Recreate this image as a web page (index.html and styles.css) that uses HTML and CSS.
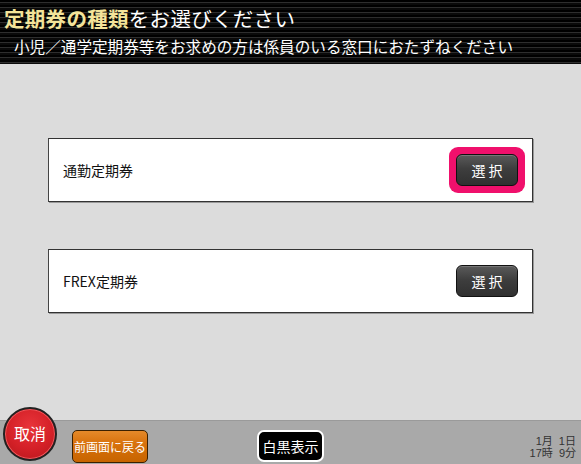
FILE: index.html
```html
<!doctype html>
<html lang="ja">
  <head>
    <meta charset="utf-8"/>
    <title>定期券の種類</title>
    <link rel="stylesheet" href="styles.css">
  </head>
  <body>
    <div class="header">
      <h1 class="header__title"><span class="header__accent">定期券の種類</span>をお選びください</h1>
      <p class="header__note">小児／通学定期券等をお求めの方は係員のいる窓口におたずねください</p>
    </div>

    <div class="main">
      <div class="card">
        <span class="card__label">通勤定期券</span>
        <span class="card__focus"><a class="btn card__btn">選 択</a></span>
      </div>
      <div class="card">
        <span class="card__label">FREX定期券</span>
        <span class="card__slot"><a class="btn card__btn">選 択</a></span>
      </div>
    </div>

    <div class="footer">
      <a class="footer__cancel">取消</a>
      <a class="footer__back">前画面に戻る</a>
      <a class="footer__mono">白黒表示</a>
      <div class="footer__clock">
        <span class="footer__line">1月&nbsp;&nbsp;1日</span>
        <span class="footer__line">17時&nbsp;&nbsp;9分</span>
      </div>
    </div>
  </body>
</html>
```

FILE: styles.css
```css
body {
  margin: 0;
  width: 581px;
  height: 464px;
  display: flex;
  flex-direction: column;
  overflow: hidden;
  font-family: "Noto Sans CJK JP", "Noto Sans", sans-serif;
  background-color: #dcdcdc;
}
.header {
  height: 64px;
  flex-shrink: 0;
  padding: 0 0 0 4px;
  box-sizing: border-box;
  background: repeating-linear-gradient(to bottom, #000 0, #000 2px, #2e2e2e 2px, #2e2e2e 3px, #0a0a0a 3px, #0a0a0a 5px);
  color: #fff;
}
.header__title {
  margin: 0;
  font-size: 20.5px;
  font-weight: normal;
  line-height: 30px;
  padding-top: 3px;
  letter-spacing: 0.3px;
}
.header__accent {
  color: #f4e49a;
  font-weight: bold;
}
.header__note {
  margin: 0;
  padding-left: 10px;
  font-size: 15.6px;
  line-height: 26px;
}
.main {
  flex: 1;
  display: flex;
  flex-direction: column;
  gap: 47px;
  padding: 74px 48px 0 48px;
}
.card {
  height: 62px;
  display: flex;
  align-items: center;
  justify-content: space-between;
  background-color: #fff;
  border: 1px solid #333;
  border-left-color: #444;
  box-shadow: 1px 1px 0 #999;
  padding: 0 7px 0 14px;
}
.card__label {
  font-size: 14px;
  color: #111;
}
.card__focus {
  display: flex;
  padding: 7px;
  border-radius: 9px;
  background-color: #f0106c;
}
.card__slot {
  display: flex;
  padding: 7px;
}
.btn {
  display: block;
  width: 62px;
  height: 32px;
  box-sizing: border-box;
  line-height: 30px;
  text-align: center;
  color: #fff;
  font-size: 14px;
  border-radius: 6px;
  border: 1px solid #111;
  background: linear-gradient(to bottom, #5a5a5a 0, #3e3e3e 45%, #303030 100%);
  box-shadow: inset 0 1px 0 #777;
}
.footer {
  height: 43px;
  flex-shrink: 0;
  display: flex;
  align-items: center;
  background-color: #a9a9a9;
  border-top: 1px solid #9a9a9a;
  padding: 0 5px 0 3px;
  overflow: visible;
}
.footer__cancel {
  width: 50px;
  height: 50px;
  margin-top: -18px;
  border-radius: 50%;
  border: 2px solid #222;
  background: radial-gradient(circle at 50% 35%, #e8343a 0, #d42027 55%, #b3161c 100%);
  box-shadow: inset 0 0 0 1px #f05a5e;
  color: #fff;
  font-size: 16px;
  line-height: 48px;
  text-align: center;
  flex-shrink: 0;
}
.footer__back {
  margin-left: 15px;
  margin-top: 8px;
  width: 76px;
  height: 33px;
  box-sizing: border-box;
  border: 1px solid #3a2000;
  border-radius: 5px;
  background: linear-gradient(to bottom, #e58a2a 0, #d8720d 40%, #c76400 100%);
  color: #fff;
  font-size: 12px;
  line-height: 31px;
  text-align: center;
}
.footer__mono {
  margin-left: 109px;
  margin-top: 7px;
  width: 67px;
  height: 32px;
  box-sizing: border-box;
  border: 2px solid #fff;
  border-radius: 7px;
  background-color: #000;
  color: #fff;
  font-size: 14px;
  line-height: 28px;
  text-align: center;
}
.footer__clock {
  margin-left: auto;
  margin-top: 8px;
  display: flex;
  flex-direction: column;
  align-items: flex-end;
  font-family: "Liberation Sans", "Noto Sans CJK JP", sans-serif;
  font-size: 11px;
  color: #333;
}
.footer__line {
  display: block;
  height: 12px;
  line-height: 12px;
  overflow: visible;
}
```
